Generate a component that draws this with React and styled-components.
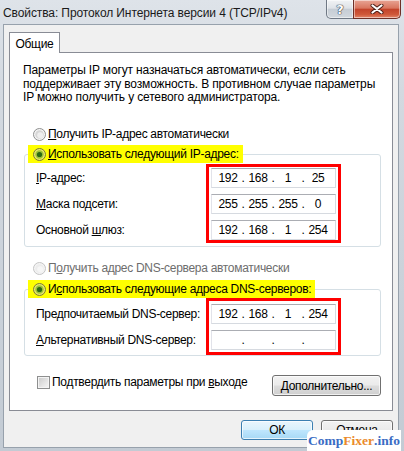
import React from "react";
import styled, { createGlobalStyle } from "styled-components";

const GlobalStyle = createGlobalStyle`
  html, body { margin: 0; padding: 0; background: #cfd6de; }
  body { width: 404px; height: 451px; overflow: hidden; }
  #root { width: 404px; height: 451px; }
`;

const FONT = `"Liberation Sans", Arial, sans-serif`;

const Window = styled.div`
  position: relative;
  width: 404px;
  height: 451px;
  box-sizing: border-box;
  display: flex;
  flex-direction: column;
  font-family: ${FONT};
  font-size: 12px;
  letter-spacing: -0.3px;
  color: #000;
  background: linear-gradient(180deg, #dee3e9 0%, #d3d9e0 20%, #c3cbd4 100%);
`;

const TitleBar = styled.div`
  height: 24px;
  flex: none;
  display: flex;
  align-items: flex-start;
`;

const Title = styled.div`
  padding: 6px 0 0 3px;
  line-height: 14px;
  letter-spacing: -0.1px;
  color: #1a1a1a;
  white-space: nowrap;
`;

const Caption = styled.div`
  margin-left: auto;
  margin-right: 3px;
  display: flex;
`;

const CapBtn = styled.div`
  height: 19px;
  box-sizing: border-box;
  display: flex;
  align-items: center;
  justify-content: center;
  width: ${(p) => (p.$close ? 48 : 28)}px;
  border: 1px solid ${(p) => (p.$close ? "#6e3027" : "#6f7884")};
  border-top: none;
  border-radius: ${(p) => (p.$close ? "0 0 5px 0" : "0 0 0 5px")};
  background: ${(p) =>
    p.$close
      ? "linear-gradient(180deg,#e8a595 0%,#d9765f 45%,#c3442b 52%,#cf5839 80%,#e2866a 100%)"
      : "linear-gradient(180deg,#f1f3f5 0%,#dfe3e8 45%,#c6cdd5 52%,#d2d8de 100%)"};
  box-shadow: inset 0 0 0 1px rgba(255, 255, 255, 0.5);
  margin-left: ${(p) => (p.$close ? "-1px" : "0")};
`;

const HelpGlyph = styled.span`
  font-family: "DejaVu Sans", sans-serif;
  font-weight: bold;
  font-size: 13px;
  line-height: 13px;
  letter-spacing: 0;
  color: #fff;
  text-shadow: 0 0 1px #2c3440, 0 0 1px #2c3440, 0 0 1px #2c3440;
`;

const Client = styled.div`
  flex: 1;
  margin: 0 5px 3px 3px;
  border: 1px solid #97a1ac;
  background: #f0f0f0;
  display: flex;
  flex-direction: column;
  padding: 7px 5px 0 5px;
`;

const TabStrip = styled.div`
  display: flex;
`;

const Tab = styled.div`
  width: 51px;
  height: 21px;
  box-sizing: border-box;
  border: 1px solid #898c95;
  border-bottom: none;
  background: #fff;
  margin-bottom: -1px;
  position: relative;
  z-index: 1;
  display: flex;
  align-items: center;
  justify-content: center;
  padding-top: 1px;
`;

const Pane = styled.div`
  border: 1px solid #898c95;
  background: #fff;
  padding: 11px 0 14px 0;
  display: flex;
  flex-direction: column;
`;

const Description = styled.div`
  margin-left: 13px;
  line-height: 13.5px;
  letter-spacing: -0.15px;
  white-space: nowrap;
`;

const RadioRow = styled.div`
  display: flex;
  align-items: center;
  gap: 2px;
  height: 16px;
  margin: ${(p) => p.$mt}px 0 0 23px;
  color: ${(p) => (p.$disabled ? "#6d6d6d" : "#000")};
  white-space: nowrap;
`;

const Group = styled.fieldset`
  margin: ${(p) => p.$mt}px 11px 0 14px;
  padding: 0;
  border: 1px solid #d5dfe5;
  border-radius: 3px;
  min-width: 0;
`;

const Legend = styled.legend`
  margin-left: 3px;
  padding: 0;
`;

const Mark = styled.div`
  display: flex;
  align-items: center;
  gap: 2px;
  height: 18px;
  padding: 0 4px 0 5px;
  white-space: nowrap;
  background: ${(p) => (p.$on ? "#ffff00" : "transparent")};
`;

const GroupBody = styled.div`
  display: flex;
  padding: ${(p) => p.$pt}px 0 ${(p) => p.$pb}px 11px;
`;

const Labels = styled.div`
  width: 170px;
  display: flex;
  flex-direction: column;
  gap: 6px;
  padding-top: ${(p) => p.$pt}px;
`;

const Label = styled.div`
  height: 20px;
  line-height: 20px;
  white-space: nowrap;
`;

const RedBox = styled.div`
  width: 135px;
  box-sizing: border-box;
  border: 3px solid #ff0000;
  padding: ${(p) => p.$pad};
  display: flex;
  flex-direction: column;
  gap: 6px;
`;

const IpBox = styled.div`
  width: 125px;
  height: 20px;
  box-sizing: border-box;
  border: 1px solid #d6dae0;
  border-top-color: #abadb3;
  border-left-color: #e2e3ea;
  background: #fff;
  display: flex;
  align-items: center;
  padding-left: 4px;
`;

const Octet = styled.span`
  width: 24px;
  text-align: center;
`;

const Dot = styled.span`
  width: 6px;
  text-align: center;
`;

const BottomRow = styled.div`
  display: flex;
  align-items: flex-start;
  justify-content: space-between;
  margin: 19px 11px 0 27px;
`;

const CheckLabel = styled.label`
  display: flex;
  align-items: center;
  gap: 2px;
  margin-top: 1px;
  line-height: 13px;
  white-space: nowrap;
`;

const CheckBox = styled.span`
  width: 13px;
  height: 13px;
  box-sizing: border-box;
  border: 1px solid #8e8f8f;
  background: linear-gradient(135deg, #c9c9c9 0%, #e6e6e6 60%, #f6f6f6 100%);
  box-shadow: inset 0 0 0 1px #f4f4f4;
`;

const Button = styled.div`
  box-sizing: border-box;
  width: ${(p) => p.$w}px;
  height: ${(p) => p.$h}px;
  display: flex;
  align-items: center;
  justify-content: center;
  border-radius: 3px;
  border: 1px solid ${(p) => (p.$default ? "#3c7fb1" : "#707070")};
  background: ${(p) =>
    p.$default
      ? "linear-gradient(180deg,#eaf6fd 0%,#d9f0fc 48%,#bee6fd 52%,#a7d9f5 100%)"
      : "linear-gradient(180deg,#f2f2f2 0%,#ebebeb 48%,#dddddd 52%,#cfcfcf 100%)"};
  box-shadow: inset 0 0 0 1px rgba(255, 255, 255, 0.7);
  white-space: nowrap;
`;

const DialogButtons = styled.div`
  display: flex;
  justify-content: flex-end;
  gap: 8px;
  margin-top: 9px;
`;

const Watermark = styled.div`
  position: absolute;
  right: 3px;
  bottom: 0;
  width: 94px;
  height: 21px;
  background: #fff;
  border-radius: 6px 0 0 0;
  display: flex;
  align-items: center;
  justify-content: center;
  font-family: "Liberation Serif", "Times New Roman", serif;
  font-weight: bold;
  font-size: 13.5px;
  letter-spacing: 0;
  padding-top: 1px;
  box-sizing: border-box;
  color: #3a6cc4;
`;

const Orange = styled.span`
  color: #ea8a2a;
`;

const U = styled.span`
  text-decoration: underline;
  text-underline-offset: 1px;
`;

function Radio({ checked, mark, disabled }) {
  if (checked && mark) {
    return (
      <svg width="13" height="13" viewBox="0 0 13 13">
        <circle cx="6.5" cy="6.5" r="6" fill="#e9e96a" stroke="#7b7b35" />
        <circle cx="6.5" cy="6.5" r="4.2" fill="#9cc23a" />
        <circle cx="6.5" cy="6.5" r="2.6" fill="#2b6a12" />
      </svg>
    );
  }
  return (
    <svg width="13" height="13" viewBox="0 0 13 13">
      <circle
        cx="6.5"
        cy="6.5"
        r="6"
        fill="#f4f4f4"
        stroke={disabled ? "#c4c4c4" : "#8e8f8f"}
      />
      <circle cx="6.5" cy="6.5" r="4.3" fill={disabled ? "#ececec" : "#d6d6d6"} />
      <circle cx="7.2" cy="7.2" r="3" fill={disabled ? "#f6f6f6" : "#eeeeee"} />
    </svg>
  );
}

function IpField({ value }) {
  const parts = value ? value.split(".") : ["", "", "", ""];
  return (
    <IpBox>
      {parts.map((p, i) => (
        <React.Fragment key={i}>
          {i > 0 && <Dot>.</Dot>}
          <Octet>{p}</Octet>
        </React.Fragment>
      ))}
    </IpBox>
  );
}

export default function App() {
  return (
    <>
      <GlobalStyle />
      <Window>
        <TitleBar>
          <Title>Свойства: Протокол Интернета версии 4 (TCP/IPv4)</Title>
          <Caption>
            <CapBtn>
              <HelpGlyph>?</HelpGlyph>
            </CapBtn>
            <CapBtn $close>
              <svg width="14" height="10" viewBox="0 0 14 10">
                <path d="M2.5 1.5 L11.5 8.5 M11.5 1.5 L2.5 8.5" stroke="#4a1d16" strokeWidth="4" strokeLinecap="round" />
                <path d="M2.5 1.5 L11.5 8.5 M11.5 1.5 L2.5 8.5" stroke="#ffffff" strokeWidth="2.2" strokeLinecap="round" />
              </svg>
            </CapBtn>
          </Caption>
        </TitleBar>
        <Client>
          <TabStrip>
            <Tab>Общие</Tab>
          </TabStrip>
          <Pane>
            <Description>
              Параметры IP могут назначаться автоматически, если сеть
              <br />
              поддерживает эту возможность. В противном случае параметры
              <br />
              IP можно получить у сетевого администратора.
            </Description>

            <RadioRow $mt={21.5}>
              <Radio />
              <span>
                <U>П</U>олучить IP-адрес автоматически
              </span>
            </RadioRow>

            <Group $mt={3}>
              <Legend>
                <Mark $on>
                  <Radio checked mark />
                  <span>
                    <U>И</U>спользовать следующий IP-адрес:
                  </span>
                </Mark>
              </Legend>
              <GroupBody $pt={1} $pb={3}>
                <Labels $pt={4}>
                  <Label>
                    <U>I</U>P-адрес:
                  </Label>
                  <Label>
                    <U>М</U>аска подсети:
                  </Label>
                  <Label>
                    Основной <U>ш</U>люз:
                  </Label>
                </Labels>
                <RedBox $pad="1px 2px 0 2px">
                  <IpField value="192.168.1.25" />
                  <IpField value="255.255.255.0" />
                  <IpField value="192.168.1.254" />
                </RedBox>
              </GroupBody>
            </Group>

            <RadioRow $mt={13} $disabled>
              <Radio disabled />
              <span>
                П<U>о</U>лучить адрес DNS-сервера автоматически
              </span>
            </RadioRow>

            <Group $mt={4}>
              <Legend>
                <Mark $on>
                  <Radio checked mark />
                  <span>
                    И<U>с</U>пользовать следующие адреса DNS-серверов:
                  </span>
                </Mark>
              </Legend>
              <GroupBody $pt={0} $pb={0}>
                <Labels $pt={6}>
                  <Label>
                    Пре<U>д</U>почитаемый DNS-сервер:
                  </Label>
                  <Label>
                    <U>А</U>льтернативный DNS-сервер:
                  </Label>
                </Labels>
                <RedBox $pad="3px 2px 2px 2px">
                  <IpField value="192.168.1.254" />
                  <IpField />
                </RedBox>
              </GroupBody>
            </Group>

            <BottomRow>
              <CheckLabel>
                <CheckBox />
                <span>
                  Подтвердить параметры при <U>в</U>ыходе
                </span>
              </CheckLabel>
              <Button $w={109} $h={21}>
                <span>
                  <U>Д</U>ополнительно...
                </span>
              </Button>
            </BottomRow>
          </Pane>
          <DialogButtons>
            <Button $w={72} $h={20} $default>
              ОК
            </Button>
            <Button $w={72} $h={20}>
              Отмена
            </Button>
          </DialogButtons>
        </Client>
        <Watermark>
          Comp<Orange>Fixer</Orange>.info
        </Watermark>
      </Window>
    </>
  );
}
